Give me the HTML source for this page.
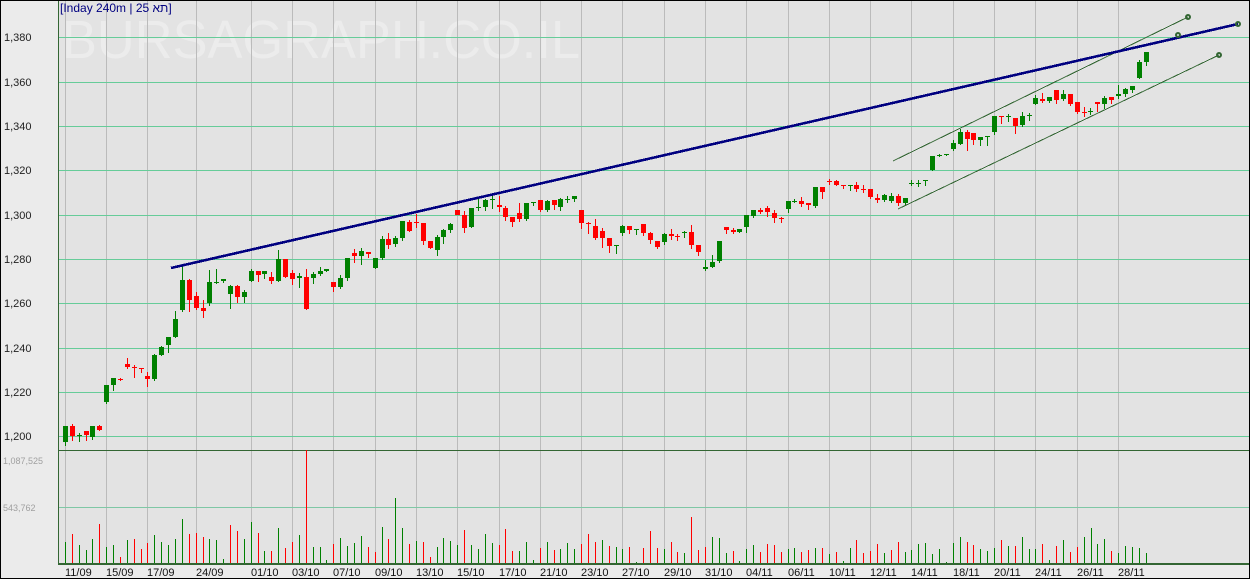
<!DOCTYPE html>
<html>
<head>
<meta charset="utf-8">
<title>Chart</title>
<style>
html,body{margin:0;padding:0;background:#ebebeb;width:1250px;height:579px;overflow:hidden}
svg{display:block;position:absolute;left:0;top:0}
text{font-family:"Liberation Sans",Arial,sans-serif}
.p{font-size:11px;fill:#222}
.v{font-size:9px;fill:#a0a0a0}
.d{font-size:11px;fill:#111}
</style>
</head>
<body>
<svg width="1250" height="579" viewBox="0 0 1250 579" xmlns="http://www.w3.org/2000/svg">
<rect x="0" y="0" width="1250" height="579" fill="#ebebeb"/>
<rect x="59" y="1" width="1190" height="563" fill="#e3e3e3"/>
<text x="62" y="58" font-size="54" fill="#ececec" textLength="518" lengthAdjust="spacingAndGlyphs">BURSAGRAPH.CO.IL</text>

<g shape-rendering="crispEdges" fill="none">
<g transform="translate(.5,0)">
<path stroke="#bbbbbb" stroke-width="1" d="M65 1V563M106 1V563M147 1V563M196 1V563M251 1V563M292 1V563M333 1V563M375 1V563M416 1V563M457 1V563M499 1V563M540 1V563M581 1V563M622 1V563M664 1V563M705 1V563M746 1V563M788 1V563M829 1V563M870 1V563M911 1V563M953 1V563M994 1V563M1035 1V563M1077 1V563M1118 1V563"/>
</g>
<g transform="translate(0,.5)">
<path stroke="#66cc99" stroke-width="1" d="M59 37H1249M59 82H1249M59 126H1249M59 170H1249M59 215H1249M59 259H1249M59 303H1249M59 348H1249M59 392H1249M59 436H1249"/>
<path stroke="#7fc7a5" stroke-width="1" d="M59 507H1249"/>
<path stroke="#336633" stroke-width="1" d="M58 450H1249"/>
</g>

<!-- volume -->
<g transform="translate(.5,0)" stroke-width="1">
<path stroke="#008000" d="M65 542V564M79 545V564M86 550V564M92 539V564M106 547V564M113 545V564M127 540V564M154 535V564M161 542V564M168 545V564M175 539V564M182 519V564M209 539V564M216 540V564M223 559V564M244 539V564M251 522V564M264 551V564M278 528V564M299 535V564M313 547V564M320 547V564M326 560V564M340 538V564M347 546V564M354 543V564M361 536V564M382 527V564M395 498V564M402 528V564M416 541V564M437 547V564M443 538V564M450 541V564M457 545V564M471 545V564M478 549V564M485 534V564M492 543V564M519 551V564M526 542V564M533 560V564M547 542V564M560 549V564M567 543V564M574 549V564M602 540V564M616 547V564M622 549V564M636 562V564M664 549V564M684 553V564M712 537V564M719 538V564M726 553V564M739 561V564M746 549V564M753 545V564M788 549V564M794 548V564M815 548V564M829 554V564M843 561V564M850 548V564M884 553V564M905 552V564M911 550V564M918 544V564M925 543V564M932 554V564M939 549V564M946 562V564M953 543V564M960 537V564M980 549V564M987 551V564M994 548V564M1008 546V564M1022 537V564M1029 549V564M1035 549V564M1049 560V564M1063 540V564M1084 537V564M1091 528V564M1097 544V564M1104 539V564M1118 553V564M1125 546V564M1132 547V564M1139 548V564M1146 553V564"/>
<path stroke="#ff0000" d="M72 534V564M99 524V564M120 557V564M134 539V564M141 549V564M147 543V564M189 534V564M196 533V564M203 537V564M230 525V564M237 531V564M258 533V564M271 551V564M285 548V564M292 542V564M306 450V564M333 544V564M368 547V564M375 552V564M388 539V564M409 544V564M423 542V564M430 557V564M464 530V564M499 545V564M505 529V564M512 551V564M540 548V564M554 550V564M581 544V564M588 534V564M595 542V564M609 546V564M629 547V564M643 548V564M650 531V564M657 548V564M671 542V564M677 552V564M691 517V564M698 550V564M705 547V564M733 551V564M760 552V564M767 544V564M774 545V564M781 552V564M801 552V564M808 550V564M822 548V564M836 552V564M856 540V564M863 553V564M870 551V564M877 544V564M891 550V564M898 542V564M967 542V564M973 545V564M1001 540V564M1015 546V564M1042 544V564M1056 546V564M1070 552V564M1077 547V564M1111 551V564"/>
</g>

<!-- candles -->
<g transform="translate(.5,0)">
<path stroke="#008000" stroke-width="1" d="M65 426V446M79 433V442M92 426V440M106 385V404M113 378V391M154 354V381M161 346V356M168 337V353M175 311V338M182 266V312M209 270V306M216 269V284M223 279V283M230 285V309M244 290V303M251 269V282M264 271V279M278 250V282M299 273V288M313 272V284M320 267V276M326 269V272M340 275V289M347 258V281M361 248V265M375 258V269M382 236V260M395 236V247M402 221V241M437 235V256M443 229V244M450 223V233M471 208V228M478 199V211M485 199V211M492 195V209M526 203V221M533 202V206M547 200V212M560 198V211M567 196V203M574 196V202M616 245V254M622 225V236M636 229V235M664 233V245M684 231V238M705 260V271M712 255V268M719 241V263M739 229V233M746 215V233M753 210V218M788 201V213M794 199V203M815 187V208M850 185V191M884 194V202M891 193V203M905 198V206M911 180V186M918 180V187M925 180V186M932 156V171M939 154V157M946 154V156M953 140V151M960 129V145M980 137V146M987 136V146M994 116V135M1008 114V122M1022 112V127M1029 113V121M1035 95V105M1049 97V103M1063 90V101M1090 108V115M1104 96V109M1118 85V99M1125 88V97M1132 86V93M1139 60V79M1146 52V66"/>
<path stroke="#008000" stroke-width="5" d="M65 426V442M79 435V436M92 426V437M106 385V402M113 378V385M154 355V379M161 347V355M168 337V345M175 319V337M182 280V310M209 282V303M216 282V283M223 279V281M230 286V294M244 292V297M251 271V281M264 271V274M278 259V281M299 276V278M313 274V278M320 271V274M326 269V271M340 278V287M347 258V278M361 251V256M375 258V268M382 239V258M395 238V244M402 221V238M437 237V250M443 230V237M450 224V230M471 208V227M478 207V208M485 200V207M492 199V200M526 203V219M533 202V203M547 201V210M560 199V207M567 199V200M574 196V199M616 245V246M622 226V233M636 229V230M664 234V242M684 232V233M705 267V269M712 262V267M719 241V261M739 229V232M746 215V227M753 210V216M788 201V209M794 201V202M815 187V206M850 185V186M884 195V200M891 196V201M905 198V203M911 183V184M918 183V184M925 180V181M932 156V170M939 155V156M946 154V155M953 143V149M960 132V144M980 137V140M987 136V137M994 116V132M1008 116V117M1022 116V125M1029 115V116M1035 98V104M1049 97V101M1063 94V99M1090 111V112M1104 98V104M1118 94V96M1125 89V94M1132 86V90M1139 62V78M1146 52V62"/>
<path stroke="#ff0000" stroke-width="1" d="M72 424V441M86 431V441M99 425V431M120 378V381M127 358V369M134 365V378M141 368V373M147 372V387M189 279V312M196 292V310M203 300V318M237 285V303M258 271V282M271 272V284M285 259V278M292 270V285M306 269V310M333 282V292M354 249V263M368 252V258M388 233V249M409 220V232M416 214V228M423 223V245M430 241V249M457 210V215M464 211V233M499 196V212M505 206V221M512 217V227M519 203V222M540 200V212M554 200V210M581 210V229M588 222V234M595 219V240M602 228V248M609 238V253M629 226V234M643 224V236M650 232V244M657 241V249M671 229V240M677 234V241M691 225V249M698 245V256M726 227V234M733 228V234M760 208V214M767 206V217M774 210V223M781 217V223M801 197V207M808 203V210M822 187V199M829 179V185M836 180V186M843 185V189M856 182V192M863 185V193M870 189V199M877 194V203M898 194V206M967 130V151M973 133V145M1001 116V124M1015 118V134M1042 93V103M1056 90V104M1070 94V106M1077 102V114M1084 107V117M1097 102V112M1111 97V104"/>
<path stroke="#ff0000" stroke-width="5" d="M72 426V436M86 431V435M99 426V430M120 379V380M127 364V367M134 367V368M141 368V369M147 376V379M189 280V300M196 296V308M203 308V311M237 286V297M258 271V275M271 277V281M285 259V277M292 273V279M306 277V309M333 282V287M354 253V256M368 252V254M388 239V245M409 222V231M416 222V223M423 223V241M430 241V248M457 210V215M464 215V228M499 205V207M505 208V217M512 217V222M519 213V219M540 200V210M554 200V205M581 210V223M588 223V224M595 226V238M602 231V238M609 238V246M629 226V230M643 224V233M650 233V240M657 241V247M671 234V236M677 236V237M691 232V245M698 245V252M726 227V230M733 230V232M760 210V212M767 208V212M774 213V218M781 218V219M801 201V204M808 203V205M822 187V192M829 181V182M836 181V185M843 185V186M856 185V189M863 189V190M870 189V197M877 198V200M898 196V203M967 132V139M973 133V140M1001 116V117M1015 118V126M1042 99V101M1056 90V100M1070 94V104M1077 102V112M1084 112V113M1097 102V104M1111 97V100"/>
</g>

<!-- axes -->
<rect x="58" y="1" width="1" height="564" fill="#336633"/>
<rect x="58" y="563" width="1191" height="2" fill="#336633"/>

<!-- trend lines -->
<path stroke="#336633" stroke-width="1" d="M893 161L1188 17M898 209L1219 55"/>
<path stroke="#000080" stroke-width="2.6" d="M171 268L1238 24"/>
</g>

<g fill="none" stroke="#336633" stroke-width="2">
<circle cx="1188" cy="17" r="2"/>
<circle cx="1178" cy="35" r="2"/>
<circle cx="1238" cy="24" r="2"/>
<circle cx="1219" cy="55" r="2"/>
</g>

<!-- frame -->
<g shape-rendering="crispEdges" fill="#000">
<rect x="0" y="0" width="1250" height="1"/>
<rect x="0" y="0" width="1" height="579"/>
<rect x="0" y="578" width="1250" height="1"/>
<rect x="1249" y="0" width="1" height="579"/>
</g>

<!-- title -->
<text x="60" y="12" font-size="12" fill="#000080">[Inday 240m | 25 תא]</text>

<!-- price labels -->
<text class="p" x="4" y="41">1,380</text>
<text class="p" x="4" y="86">1,360</text>
<text class="p" x="4" y="130">1,340</text>
<text class="p" x="4" y="174">1,320</text>
<text class="p" x="4" y="219">1,300</text>
<text class="p" x="4" y="263">1,280</text>
<text class="p" x="4" y="307">1,260</text>
<text class="p" x="4" y="352">1,240</text>
<text class="p" x="4" y="396">1,220</text>
<text class="p" x="4" y="440">1,200</text>
<text class="v" x="3" y="464">1,087,525</text>
<text class="v" x="3" y="511">543,762</text>

<!-- dates -->
<text class="d" x="65" y="576">11/09</text>
<text class="d" x="106" y="576">15/09</text>
<text class="d" x="147" y="576">17/09</text>
<text class="d" x="196" y="576">24/09</text>
<text class="d" x="251" y="576">01/10</text>
<text class="d" x="292" y="576">03/10</text>
<text class="d" x="333" y="576">07/10</text>
<text class="d" x="375" y="576">09/10</text>
<text class="d" x="416" y="576">13/10</text>
<text class="d" x="457" y="576">15/10</text>
<text class="d" x="499" y="576">17/10</text>
<text class="d" x="540" y="576">21/10</text>
<text class="d" x="581" y="576">23/10</text>
<text class="d" x="622" y="576">27/10</text>
<text class="d" x="664" y="576">29/10</text>
<text class="d" x="705" y="576">31/10</text>
<text class="d" x="746" y="576">04/11</text>
<text class="d" x="788" y="576">06/11</text>
<text class="d" x="829" y="576">10/11</text>
<text class="d" x="870" y="576">12/11</text>
<text class="d" x="911" y="576">14/11</text>
<text class="d" x="953" y="576">18/11</text>
<text class="d" x="994" y="576">20/11</text>
<text class="d" x="1035" y="576">24/11</text>
<text class="d" x="1077" y="576">26/11</text>
<text class="d" x="1118" y="576">28/11</text>
</svg>
</body>
</html>
